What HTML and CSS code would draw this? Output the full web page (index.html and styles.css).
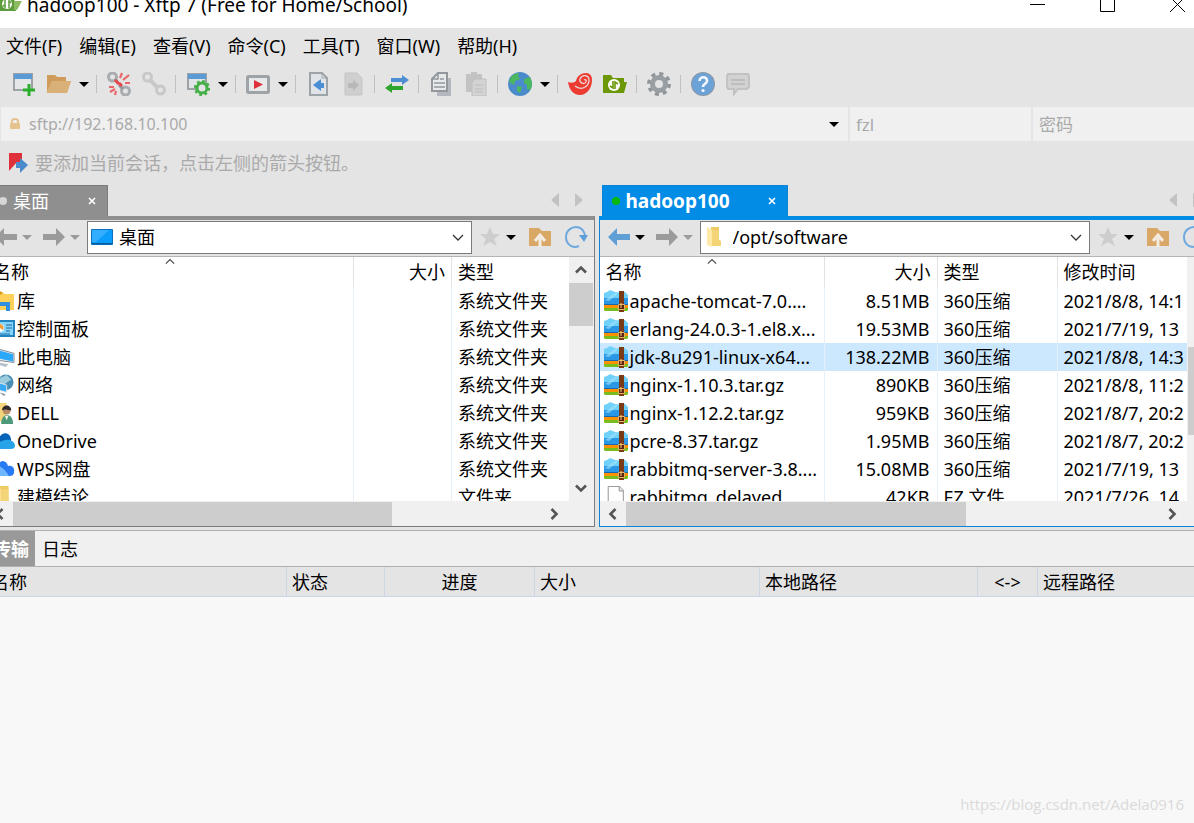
FILE: index.html
```html
<!DOCTYPE html>
<html lang="zh-CN">
<head>
<meta charset="utf-8">
<title>hadoop100 - Xftp 7</title>
<link rel="stylesheet" href="styles.css">
</head>
<body>
<svg class="sprite" aria-hidden="true">
  <symbol id="caret" viewBox="0 0 10 5"><path d="M0 0h10L5 5z" fill="currentColor"/></symbol>
  <symbol id="new" viewBox="0 0 24 24"><path d="M2 2h18v16H2z" fill="#e4e6e8" stroke="#9da2a6" stroke-width="2"/><path d="M2 2h18v5H2z" fill="#5b9bd5"/><path d="M17 12v12M11 18h12" stroke="#2bae2b" stroke-width="3"/></symbol>
  <symbol id="open" viewBox="0 0 24 24"><path d="M0 3h8l2 2h9v4h5l-4 12H0z" fill="#dcac6c"/><path d="M4 9h20l-4 12H0z" fill="#d9b078"/><path d="M0 3h8l2 2h9v4H5L0 19z" fill="#cf9c5c"/></symbol>
  <symbol id="unlink" viewBox="0 0 24 24"><g fill="none" stroke="#a9adb0" stroke-width="3"><circle cx="5.500" cy="5" r="4"/><circle cx="18.500" cy="19" r="4"/></g><path d="M8 7l3 4M16 17l-4-4" stroke="#94999d" stroke-width="3"/><path d="M8 8l4 4M12 11l3 3" stroke="#e8474c" stroke-width="3"/><path d="M13 6l2-5M16 8l6-5M18 11h5M2 15h5M3 20l5-3M8 23l1-4" stroke="#ea666a" stroke-width="2.200"/></symbol>
  <symbol id="link" viewBox="0 0 24 24"><g fill="none" stroke="#c8c8c8" stroke-width="3"><circle cx="5.500" cy="5" r="4"/><circle cx="18.500" cy="18" r="4"/><path d="M8 8l8 8" stroke-width="4"/></g></symbol>
  <symbol id="wingear" viewBox="0 0 24 24"><path d="M2 2h18v15H2z" fill="#e2e5e8" stroke="#9da2a6" stroke-width="2"/><path d="M2 2h18v5H2z" fill="#5b9bd5"/><circle cx="16" cy="16" r="5" fill="#e4e4e4" stroke="#45b045" stroke-width="3"/><circle cx="16" cy="16" r="6.600" fill="none" stroke="#45b045" stroke-width="3" stroke-dasharray="2.600 2.580"/></symbol>
  <symbol id="play" viewBox="0 0 24 24"><rect x="1.500" y="4.500" width="21" height="16" rx="1" fill="#e6e8e9" stroke="#9ea3a7" stroke-width="3"/><path d="M8 8l9 4.500L8 17z" fill="#e0313a"/></symbol>
  <symbol id="docin" viewBox="0 0 24 24"><path d="M4 1h12l5 5v17H4z" fill="#e0e4e8" stroke="#9ea3a7" stroke-width="2"/><path d="M16 1v5h5" fill="none" stroke="#9ea3a7"/><path d="M7 13l8-6v4h3v5h-3v3z" fill="#4a8fd4"/></symbol>
  <symbol id="docout" viewBox="0 0 24 24"><path d="M4 1h12l5 5v17H4z" fill="#cfcfcf" stroke="#c5c5c5"/><path d="M18 13l-6-5v3H7v5h5v3z" fill="#b8b8b8"/></symbol>
  <symbol id="swap" viewBox="0 0 24 24"><path d="M6 6h11V3l7 5-7 5v-3H6z" fill="#4e8fd2"/><path d="M18 14H7v-3l-7 5 7 5v-3h11z" fill="#2ea62e"/></symbol>
  <symbol id="copy" viewBox="0 0 24 24"><path d="M8 6h14v18H8z" fill="#b2b8be"/><path d="M9 1h9v18H3V7z" fill="#e7e9ea" stroke="#92989d" stroke-width="2"/><path d="M9 1v6H3M5 11h11M5 15h11M11 7h4" fill="none" stroke="#92989d" stroke-width="1.500"/></symbol>
  <symbol id="paste" viewBox="0 0 24 24"><path d="M2 2h5V0h6v2h5v18H2z" fill="#c3c3c3"/><path d="M11 7h11v17H8V10z" fill="#d3d3d3" stroke="#bebebe"/><path d="M11 13h8M11 17h8M11 20h8" stroke="#bcbcbc"/></symbol>
  <symbol id="globe" viewBox="0 0 24 24"><circle cx="12" cy="12" r="12" fill="#4c8bcb"/><path d="M3 5C6 2 8 1 11 1l-1 3 2 3-5 2-1 4-5-3zM16 7l6-2c2 4 3 9 0 13l-3-1v-4l-3-2zM9 14l5 1-2 6-3-2z" fill="#4bb860"/></symbol>
  <symbol id="shell" viewBox="0 0 24 24"><path d="M0 10c3 1 6 1 8-1 1-5 5-8 10-8 4 0 6 3 6 7 0 8-5 15-12 15C5 23 1 17 0 10z" fill="#ee3b32"/><path d="M7 14c6 5 14 1 14-6 0-5-7-6-9-1-1 4 4 6 6 3 1-2-1-3-2-2" fill="none" stroke="#e9d6d3" stroke-width="1.300"/></symbol>
  <symbol id="xftp" viewBox="0 0 24 24"><path d="M0 3h8l2 3h11v4h3l-3 11H0z" fill="#6c9808"/><circle cx="11" cy="13" r="6" fill="#fff"/><path d="M10 9v7L7 14M12 17v-7l3 2" fill="none" stroke="#6c9808" stroke-width="1.600"/></symbol>
  <symbol id="gear" viewBox="0 0 24 24"><circle cx="12" cy="12" r="10" fill="none" stroke="#90959a" stroke-width="4" stroke-dasharray="3.900 3.950"/><circle cx="12" cy="12" r="6.500" fill="none" stroke="#999ea2" stroke-width="5"/></symbol>
  <symbol id="help" viewBox="0 0 24 24"><circle cx="12" cy="12" r="12" fill="#8999a8"/><circle cx="12" cy="12" r="10.800" fill="#6ba2d8"/><path d="M8.500 9c0-5 8-5 7.500 0-.2 3-4 2.500-4 6" fill="none" stroke="#f4f8fc" stroke-width="2.600"/><circle cx="12" cy="18.500" r="1.600" fill="#f4f8fc"/></symbol>
  <symbol id="chat" viewBox="0 0 24 24"><path d="M2 2h20l1 2v11l-2 2H12l-4 5v-5H2l-1-2V4z" fill="#d2d2d2" stroke="#c2c2c2" stroke-width="2"/><path d="M5 8h14M5 12h14" stroke="#bdbdbd" stroke-width="2"/></symbol>
  <symbol id="lock" viewBox="0 0 10 12"><path d="M2 5V3q0-2 3-2t3 2v2" fill="none" stroke="#e6c28e" stroke-width="2"/><rect y="5" width="10" height="6" rx="1" fill="#e6c28e"/></symbol>
  <symbol id="flag" viewBox="0 0 20 20"><path d="M0 0h13v11L8 9 0 18z" fill="#de3139"/><path d="M7 9h4V5l8 7-8 8v-5H7z" fill="#4c8bcb"/></symbol>
  <symbol id="back" viewBox="0 0 24 24"><path d="M1 12l9-9v6h13v6H10v6z" fill="currentColor"/></symbol>
  <symbol id="forward" viewBox="0 0 24 24"><path d="M23 12l-9-9v6H1v6h13v6z" fill="currentColor"/></symbol>
  <symbol id="star" viewBox="0 0 24 24"><path d="M12 2l3 7h7l-6 5 3 7-7-4-7 4 3-7-6-5h7z" fill="#cdcdcd"/></symbol>
  <symbol id="up" viewBox="0 0 24 24"><path d="M1 3h10l3 3h9v15H1z" fill="#d9a866"/><path d="M12 22v-9M7 16l5-6 5 6" fill="none" stroke="#f3ece4" stroke-width="3"/></symbol>
  <symbol id="refresh" viewBox="0 0 24 24"><path d="M15 21C8 24 2 19 2 12S8 2 12 2c6 0 9 5 9 10" fill="none" stroke="#6ea9de" stroke-width="2"/><path d="M15 10h9l-4 7z" fill="#5e9fd8"/></symbol>
  <symbol id="monitor" viewBox="0 0 22 16"><path d="M.5.5h21v15H.5z" fill="#0c9dfb" stroke="#0b6fb9"/><path d="M1 1h17L5 13H1z" fill="#33adff"/><path d="M1 14h20v1H1z" fill="#075c9d"/></symbol>
  <symbol id="folder" viewBox="0 0 14 20"><path d="M4 0h8v13l2 1v5H4z" fill="#eecb62"/><path d="M0 0l5 3v17l-5-2z" fill="#ffe9a6"/><path d="M5 3h7v10l2 1v5H5z" fill="#f3d477"/></symbol>
  <symbol id="zip" viewBox="0 0 24 22"><path d="M0 6V3l3-1 3-2 5 2h10l3 3v9H0z" fill="#6fd0fa"/><path d="M0 8h24v6H0z" fill="#2b98e6"/><path d="M1 10L12 2h4L5 11z" fill="#a4e3fd" opacity=".6"/><path d="M0 14h24v4H0z" fill="#fb9300"/><path d="M0 14h24v1H0z" fill="#1967b0"/><path d="M0 18h24v2l-1 1H1l-1-1z" fill="#76bd1d"/><path d="M15 1h5v21h-5z" fill="#7a3b16"/><path d="M14.500 14.500h6v5h-6z" fill="#5b240c" stroke="#e3b363"/><path d="M17 13v5" stroke="#f9d285"/></symbol>
  <symbol id="page" viewBox="0 0 24 24"><path d="M3.500.5H16l4 4v19H3.500z" fill="#fff" stroke="#8d8d8d"/><path d="M15.500.5v5h5" fill="#e3e3e3" stroke="#8d8d8d"/></symbol>
  <symbol id="library" viewBox="0 0 24 22"><path d="M3 2h8l3 2h9v16H3z" fill="#fdd05a"/><path d="M4 1h5l3 2-3 2H4z" fill="#d59d13"/><path d="M5 12h14v9h-4v-5H5z" fill="#2f8fe0"/></symbol>
  <symbol id="panel" viewBox="0 0 24 18"><path d="M1 1h22v15H1z" fill="#86d3fb" stroke="#2382c0" stroke-width="2"/><circle cx="9" cy="8" r="4" fill="#f5fafc"/><path d="M9 8V4a4 4 0 013 6z" fill="#f39b32"/><path d="M15 5h6M15 8h6M15 11h4M4 14h15" stroke="#166b9f"/></symbol>
  <symbol id="computer" viewBox="0 0 24 24"><path d="M2 2l22 6v10L2 15z" fill="#e4e8eb" stroke="#74838f"/><path d="M4 4l19 5v8L4 13z" fill="#2aa8fa"/><path d="M8 18l10 2-3 3-9-3z" fill="#b9c1c7"/></symbol>
  <symbol id="network" viewBox="0 0 24 24"><circle cx="15" cy="9" r="8.500" fill="#4a8db5"/><path d="M9 4l7-3 5 5-6 4-3 6-5-5z" fill="#9bcbdc"/><path d="M5 9l11 3v8L5 17z" fill="#38a9f5" stroke="#e2e9ed"/><path d="M8 20l7 2-2 2z" fill="#8898a4"/></symbol>
  <symbol id="user" viewBox="0 0 24 24"><path d="M4 1h12v20H4z" fill="#f4d57b"/><path d="M10 24c0-13 13-13 13 0z" fill="#4c9a7a"/><circle cx="16" cy="9" r="4.500" fill="#b78b68"/><path d="M11 9c0-7 10-7 10 0-3 0-6-2-10 0z" fill="#322b29"/><path d="M14 15l2 5 2-5z" fill="#eef1ee"/></symbol>
  <symbol id="onedrive" viewBox="0 0 24 16"><path d="M2 9c0-4 4-5 6-4 3-7 11-6 12 1v6H3z" fill="#0864b8"/><path d="M5 16c-5 0-5-6 0-6l9-3c4-1 10 1 10 6 0 2-2 3-4 3z" fill="#27a3ea"/></symbol>
  <symbol id="wps" viewBox="0 0 24 16"><path d="M8 2c4-4 8-1 9 3 4-1 7 2 6 6 0 3-2 4-5 4h-6z" fill="#287bf4"/><path d="M3 15c-4-3-3-9 2-10 6 0 10 5 13 10z" fill="#70b6ff"/></symbol>
  <symbol id="close" viewBox="0 0 8 8"><path d="M1 1l6 6M7 1L1 7" stroke="currentColor" stroke-width="1.600"/></symbol>
  <symbol id="chev" viewBox="0 0 12 12"><path d="M1 4l5 5 5-5" fill="none" stroke="currentColor" stroke-width="1.300"/></symbol>
  <symbol id="arrow" viewBox="0 0 12 12"><path d="M1 3.500l5 5 5-5" fill="none" stroke="currentColor" stroke-width="2.600"/></symbol>
  <symbol id="tri" viewBox="0 0 8 14"><path d="M8 0v14L0 7z" fill="#c2c2c2"/></symbol>
</svg>

<div class="window">
  <header class="titlebar">
    <svg class="app-icon" viewBox="0 0 28 16"><path d="M0 0h20l2 14H0z" fill="#5d9c3b"/><path d="M20 4h8l-5 9h-3z" fill="#8dbb62"/><circle cx="13" cy="7" r="5" fill="#fff"/><path d="M11 3v7L9 8M15 11V4l2 2" fill="none" stroke="#5d9c3b" stroke-width="1.500"/></svg>
    <h1>hadoop100 - Xftp 7 (Free for Home/School)</h1>
    <div class="win-buttons">
      <button aria-label="最小化"><svg viewBox="0 0 16 16"><path d="M0 7.500h15" stroke="#000"/></svg></button>
      <button aria-label="最大化"><svg viewBox="0 0 16 16"><path d="M.5.5h14v14H.5z" fill="none" stroke="#000"/></svg></button>
      <button aria-label="关闭"><svg viewBox="0 0 16 16"><path d="M0 0l15 15M15 0L0 15" stroke="#000"/></svg></button>
    </div>
  </header>

  <nav class="menubar">
    <button>文件(F)</button><button>编辑(E)</button><button>查看(V)</button><button>命令(C)</button><button>工具(T)</button><button>窗口(W)</button><button>帮助(H)</button>
  </nav>

  <div class="toolbar" role="toolbar">
    <button class="tool" aria-label="新建"><svg><use href="#new"/></svg></button>
    <button class="tool" aria-label="打开"><svg><use href="#open"/></svg></button>
    <button class="drop" aria-label="打开列表"><svg><use href="#caret"/></svg></button><i class="sep"></i>
    <button class="tool" aria-label="断开"><svg><use href="#unlink"/></svg></button>
    <button class="tool" aria-label="重新连接"><svg><use href="#link"/></svg></button><i class="sep"></i>
    <button class="tool" aria-label="属性"><svg><use href="#wingear"/></svg></button>
    <button class="drop" aria-label="属性列表"><svg><use href="#caret"/></svg></button><i class="sep"></i>
    <button class="tool" aria-label="运行"><svg><use href="#play"/></svg></button>
    <button class="drop" aria-label="运行列表"><svg><use href="#caret"/></svg></button><i class="sep"></i>
    <button class="tool" aria-label="下载"><svg><use href="#docin"/></svg></button>
    <button class="tool" aria-label="上传"><svg><use href="#docout"/></svg></button><i class="sep"></i>
    <button class="tool" aria-label="同步"><svg><use href="#swap"/></svg></button><i class="sep"></i>
    <button class="tool" aria-label="复制"><svg><use href="#copy"/></svg></button>
    <button class="tool" aria-label="粘贴"><svg><use href="#paste"/></svg></button><i class="sep"></i>
    <button class="tool" aria-label="编码"><svg><use href="#globe"/></svg></button>
    <button class="drop" aria-label="编码列表"><svg><use href="#caret"/></svg></button><i class="sep"></i>
    <button class="tool" aria-label="Xshell"><svg><use href="#shell"/></svg></button>
    <button class="tool" aria-label="Xftp"><svg><use href="#xftp"/></svg></button><i class="sep"></i>
    <button class="tool" aria-label="选项"><svg><use href="#gear"/></svg></button><i class="sep"></i>
    <button class="tool" aria-label="帮助"><svg><use href="#help"/></svg></button>
    <button class="tool" aria-label="反馈"><svg><use href="#chat"/></svg></button>
  </div>

  <form class="address">
    <div class="field">
      <svg class="lock"><use href="#lock"/></svg>
      <input aria-label="地址" placeholder="sftp://192.168.10.100">
      <button type="button" class="drop" aria-label="历史地址"><svg><use href="#caret"/></svg></button>
    </div>
    <div class="field"><input aria-label="用户名" placeholder="fzl"></div>
    <div class="field"><input type="password" aria-label="密码" placeholder="密码"></div>
  </form>

  <div class="hint"><svg><use href="#flag"/></svg><p>要添加当前会话，点击左侧的箭头按钮。</p></div>

  <main class="panes">
    <section class="pane local">
      <div class="tabs">
        <div class="tab"><i class="dot"></i><span>桌面</span><button aria-label="关闭标签"><svg><use href="#close"/></svg></button></div>
        <div class="tab-scroll"><svg><use href="#tri"/></svg><svg class="flip"><use href="#tri"/></svg></div>
      </div>
      <div class="body">
        <div class="nav">
          <button class="ico dim" aria-label="后退"><svg><use href="#back"/></svg></button>
          <button class="drop dim" aria-label="后退列表"><svg><use href="#caret"/></svg></button>
          <button class="ico dim fwd" aria-label="前进"><svg><use href="#forward"/></svg></button>
          <button class="drop dim" aria-label="前进列表"><svg><use href="#caret"/></svg></button>
          <div class="combo"><svg class="monitor"><use href="#monitor"/></svg><select aria-label="本地路径"><option>桌面</option></select><svg class="chev"><use href="#chev"/></svg></div>
          <button class="ico" aria-label="收藏"><svg><use href="#star"/></svg></button>
          <button class="drop" aria-label="收藏列表"><svg><use href="#caret"/></svg></button>
          <button class="ico up" aria-label="上级"><svg><use href="#up"/></svg></button>
          <button class="ico" aria-label="刷新"><svg><use href="#refresh"/></svg></button>
        </div>
        <div class="list">
          <div class="rows">
            <table>
              <colgroup><col class="l-name"><col class="l-size"><col></colgroup>
              <thead><tr><th>名称<svg class="sort"><use href="#chev"/></svg></th><th class="num">大小</th><th>类型</th></tr></thead>
              <tbody>
                <tr><td><span class="file"><svg><use href="#library"/></svg>库</span></td><td></td><td>系统文件夹</td></tr>
                <tr><td><span class="file"><svg><use href="#panel"/></svg>控制面板</span></td><td></td><td>系统文件夹</td></tr>
                <tr><td><span class="file"><svg><use href="#computer"/></svg>此电脑</span></td><td></td><td>系统文件夹</td></tr>
                <tr><td><span class="file"><svg><use href="#network"/></svg>网络</span></td><td></td><td>系统文件夹</td></tr>
                <tr><td><span class="file"><svg><use href="#user"/></svg>DELL</span></td><td></td><td>系统文件夹</td></tr>
                <tr><td><span class="file"><svg><use href="#onedrive"/></svg>OneDrive</span></td><td></td><td>系统文件夹</td></tr>
                <tr><td><span class="file"><svg><use href="#wps"/></svg>WPS网盘</span></td><td></td><td>系统文件夹</td></tr>
                <tr><td><span class="file"><svg><use href="#folder"/></svg>建模结论</span></td><td></td><td>文件夹</td></tr>
              </tbody>
            </table>
          </div>
          <div class="vbar"><svg class="turn"><use href="#arrow"/></svg><div class="track"><i class="thumb v-local"></i></div><svg><use href="#arrow"/></svg></div>
        </div>
        <div class="hbar"><svg class="left"><use href="#arrow"/></svg><div class="track"><i class="thumb h-local"></i></div><svg class="right"><use href="#arrow"/></svg></div>
      </div>
    </section>

    <section class="pane remote">
      <div class="tabs">
        <div class="tab"><i class="dot"></i><span>hadoop100</span><button aria-label="关闭标签"><svg><use href="#close"/></svg></button></div>
        <div class="tab-scroll"><svg><use href="#tri"/></svg><svg class="flip"><use href="#tri"/></svg></div>
      </div>
      <div class="body">
        <div class="nav">
          <button class="ico blue" aria-label="后退"><svg><use href="#back"/></svg></button>
          <button class="drop" aria-label="后退列表"><svg><use href="#caret"/></svg></button>
          <button class="ico dim fwd" aria-label="前进"><svg><use href="#forward"/></svg></button>
          <button class="drop dim" aria-label="前进列表"><svg><use href="#caret"/></svg></button>
          <div class="combo"><svg class="dir"><use href="#folder"/></svg><select aria-label="远程路径"><option>/opt/software</option></select><svg class="chev"><use href="#chev"/></svg></div>
          <button class="ico" aria-label="收藏"><svg><use href="#star"/></svg></button>
          <button class="drop" aria-label="收藏列表"><svg><use href="#caret"/></svg></button>
          <button class="ico up" aria-label="上级"><svg><use href="#up"/></svg></button>
          <button class="ico" aria-label="刷新"><svg><use href="#refresh"/></svg></button>
        </div>
        <div class="list">
          <div class="rows">
            <table>
              <colgroup><col class="r-name"><col class="r-size"><col class="r-type"><col></colgroup>
              <thead><tr><th>名称<svg class="sort"><use href="#chev"/></svg></th><th class="num">大小</th><th>类型</th><th>修改时间</th></tr></thead>
              <tbody>
                <tr><td><span class="file"><svg><use href="#zip"/></svg>apache-tomcat-7.0....</span></td><td class="num">8.51MB</td><td>360压缩</td><td>2021/8/8, 14:1</td></tr>
                <tr><td><span class="file"><svg><use href="#zip"/></svg>erlang-24.0.3-1.el8.x...</span></td><td class="num">19.53MB</td><td>360压缩</td><td>2021/7/19, 13</td></tr>
                <tr class="selected"><td><span class="file"><svg><use href="#zip"/></svg>jdk-8u291-linux-x64...</span></td><td class="num">138.22MB</td><td>360压缩</td><td>2021/8/8, 14:3</td></tr>
                <tr><td><span class="file"><svg><use href="#zip"/></svg>nginx-1.10.3.tar.gz</span></td><td class="num">890KB</td><td>360压缩</td><td>2021/8/8, 11:2</td></tr>
                <tr><td><span class="file"><svg><use href="#zip"/></svg>nginx-1.12.2.tar.gz</span></td><td class="num">959KB</td><td>360压缩</td><td>2021/8/7, 20:2</td></tr>
                <tr><td><span class="file"><svg><use href="#zip"/></svg>pcre-8.37.tar.gz</span></td><td class="num">1.95MB</td><td>360压缩</td><td>2021/8/7, 20:2</td></tr>
                <tr><td><span class="file"><svg><use href="#zip"/></svg>rabbitmq-server-3.8....</span></td><td class="num">15.08MB</td><td>360压缩</td><td>2021/7/19, 13</td></tr>
                <tr><td><span class="file"><svg><use href="#page"/></svg>rabbitmq_delayed_</span></td><td class="num">42KB</td><td>EZ 文件</td><td>2021/7/26, 14</td></tr>
              </tbody>
            </table>
          </div>
          <div class="vbar"><svg class="turn"><use href="#arrow"/></svg><div class="track"><i class="thumb v-remote"></i></div><svg><use href="#arrow"/></svg></div>
        </div>
        <div class="hbar"><svg class="left"><use href="#arrow"/></svg><div class="track"><i class="thumb h-remote"></i></div><svg class="right"><use href="#arrow"/></svg></div>
      </div>
    </section>
  </main>

  <section class="dock">
    <div class="dock-tabs"><button class="active">传输</button><button>日志</button></div>
    <table>
      <colgroup><col class="d-name"><col class="d-state"><col class="d-prog"><col class="d-size"><col class="d-local"><col class="d-dir"><col></colgroup>
      <thead><tr><th>名称</th><th>状态</th><th class="mid">进度</th><th>大小</th><th>本地路径</th><th class="mid">&lt;-&gt;</th><th>远程路径</th></tr></thead>
    </table>
  </section>
</div>
<p class="watermark">https://blog.csdn.net/Adela0916</p>
</body>
</html>
```
FILE: styles.css
```css
* { box-sizing: border-box; }
body {
  margin: 0;
  height: 100vh;
  overflow: hidden;
  background: #e4e4e4;
  color: #000;
  font: 18px/24px "Noto Sans", "Noto Sans CJK SC", sans-serif;
}
button, input, select { font: inherit; color: inherit; border: 0; background: none; padding: 0; margin: 0; outline: 0; }
button { display: flex; align-items: center; justify-content: center; flex: none; }
h1, p { margin: 0; font-weight: 400; }
svg { display: block; flex: none; }
.sprite { position: absolute; width: 0; height: 0; }

/* The window extends past both screen edges */
.window {
  display: flex;
  flex-direction: column;
  height: 100vh;
  margin: 0 -20px 0 -14px;
}

.titlebar {
  display: flex;
  height: 28px;
  padding: 0 28px 18px 8px;
  background: #fff;
  align-items: center;
  flex: none;
}
.app-icon { width: 28px; height: 16px; }
.titlebar h1 { margin-left: 5px; font-size: 19px; }
.win-buttons { display: flex; margin-left: auto; gap: 54px; }
.win-buttons svg { width: 16px; height: 16px; }

.menubar { display: flex; height: 38px; padding: 0 0 2px 20px; gap: 17px; flex: none; }

.toolbar { display: flex; height: 41px; padding: 0 0 5px 20px; align-items: center; flex: none; }
.tool { width: 35px; height: 30px; }
.tool svg { width: 24px; height: 24px; }
.drop { width: 16px; height: 24px; }
.drop svg { width: 10px; height: 5px; }
.sep { width: 1px; height: 18px; margin: 0 4px; background: #c0c0c0; }

.address { display: grid; grid-template-columns: 847fr 181fr 181fr; gap: 2px; padding-left: 15px; flex: none; color: #aaa; }
.field { display: flex; height: 34px; padding: 0 6px; background: #f0f0f0; align-items: center; min-width: 0; }
.field input { flex: 1; min-width: 0; height: 34px; font-size: 17px; }
.field:first-child input { font-size: 16px; }
.field input::placeholder { color: #aaa; opacity: 1; }
.field .drop { color: #000; }
.lock { width: 10px; height: 12px; margin: 0 9px 0 3px; }

.hint { display: flex; height: 44px; padding-left: 23px; gap: 6px; align-items: center; flex: none; color: #aaa; }
.hint svg { width: 20px; height: 20px; }

.panes { display: grid; grid-template-columns: 609fr 615fr; gap: 4px; padding-right: 1px; flex: 342 1 0; min-height: 0; }
.pane { display: flex; flex-direction: column; min-width: 0; min-height: 0; --accent: #8f8f8f; --edge: #7c7c7c; }
.remote { --accent: #028ce6; --edge: #0b84d6; }
.tabs { display: flex; height: 31px; padding-left: 3px; justify-content: space-between; flex: none; }
.tab { display: flex; align-items: center; padding: 0 11px 0 9px; background: var(--accent); border: 1px solid var(--edge); border-bottom: 0; color: #fff; }
.local .tab { width: 119px; }
.remote .tab { width: 186px; font-weight: 700; font-size: 19px; }
.dot { width: 8px; height: 8px; border-radius: 50%; background: #d6d6d6; margin-right: 6px; }
.remote .dot { background: #0ab80a; }
.tab button { margin-left: auto; }
.tab button svg { width: 8px; height: 8px; }
.tab-scroll { display: flex; gap: 16px; padding: 0 12px 2px 0; align-items: center; }
.tab-scroll svg { width: 8px; height: 14px; }
.flip { transform: scaleX(-1); }

.body {
  display: flex;
  flex-direction: column;
  flex: 1;
  min-height: 0;
  border: 1px solid var(--edge);
  border-top: 4px solid var(--accent);
}
.nav { display: flex; height: 37px; padding: 0 6px 2px 7px; align-items: center; flex: none; border-bottom: 1px solid #b4b4b4; }
.nav .drop { width: 18px; }
.ico svg { width: 24px; height: 24px; }
.dim { color: #9b9b9b; }
.blue { color: #5f9fd6; }
.fwd { margin-left: 6px; }
.up { margin: 0 12px 0 8px; }
.combo { position: relative; display: flex; flex: 1; height: 33px; margin: 0 6px 0 3px; padding-left: 3px; gap: 6px; border: 1px solid #7b7b7b; background: #fff; align-items: center; }
.combo select { flex: 1; appearance: none; height: 30px; }
.combo .chev { position: absolute; right: 7px; top: 9px; width: 12px; height: 12px; color: #333; pointer-events: none; }
.monitor { width: 22px; height: 16px; }
.dir { width: 14px; height: 20px; margin: 0 6px 0 3px; }

.list { display: flex; flex: 1; min-height: 0; background: #fff; }
.rows { flex: 1; min-width: 0; overflow: hidden; }
table { width: 100%; table-layout: fixed; border-collapse: separate; border-spacing: 0; }
th, td { text-align: left; font-weight: 400; white-space: nowrap; overflow: hidden; }
.rows th { position: relative; height: 30px; padding: 0 6px; border-right: 1px solid #e2e2e2; }
.rows td { height: 28px; padding: 0 7px 0 6px; border-right: 1px solid #e6f0fa; }
.rows th:last-child, .rows td:last-child { border-right: 0; padding-right: 0; }
.rows td:first-child { padding: 0 0 0 4px; }
.rows .num { text-align: right; }
.selected { background: #cce8ff; }
.file { display: flex; height: 28px; gap: 2px; align-items: center; }
.file svg { width: 24px; height: 22px; }
.sort { position: absolute; left: 50%; top: 0; width: 12px; height: 10px; margin-left: -6px; transform: scaleY(-1); color: #444; }
.l-name { width: 367px; }
.l-size { width: 98px; }
.r-name { width: 225px; }
.r-size { width: 113px; }
.r-type { width: 120px; }

.vbar, .hbar { display: flex; background: #f0f0f0; flex: none; color: #555; align-items: center; }
.vbar { width: 25px; flex-direction: column; padding: 7px 0; }
.vbar svg, .hbar svg { width: 12px; height: 12px; }
.vbar .track { width: 24px; flex: 1; margin: 7px 0; }
.hbar { height: 25px; padding: 0 34px 0 7px; }
.hbar .track { flex: 1; height: 24px; margin: 0 7px; }
.thumb { display: block; height: 100%; background: #cdcdcd; }
.turn { transform: scaleY(-1); }
.left { transform: rotate(90deg); }
.right { transform: rotate(-90deg); }
.v-local { height: 43px; }
.v-remote { height: 88px; margin-top: 64px; }
.h-local { width: 379px; }
.h-remote { width: 340px; }

.dock { margin-top: 3px; border-top: 1px solid #b0b0b0; flex: 292 1 0; min-height: 0; background: #f8f8f8; }
.dock-tabs { display: flex; height: 36px; background: #f0f0f0; border-bottom: 1px solid #b0b0b0; }
.dock-tabs button { padding: 0 6px 0 7px; }
.dock-tabs .active { background: #999; color: #fff; font-weight: 700; }
.dock th { height: 30px; padding: 0 5px; background: #e4e4e4; border-right: 1px solid #ccd6e4; border-bottom: 1px solid #ccd6e4; }
.dock .mid { text-align: center; }
.d-name { width: 301px; }
.d-state { width: 98px; }
.d-prog { width: 150px; }
.d-size { width: 225px; }
.d-local { width: 218px; }
.d-dir { width: 60px; }

.watermark { position: absolute; right: 10px; bottom: 7px; font-family: "Open Sans", sans-serif; font-size: 15px; color: #dadada; }
```
